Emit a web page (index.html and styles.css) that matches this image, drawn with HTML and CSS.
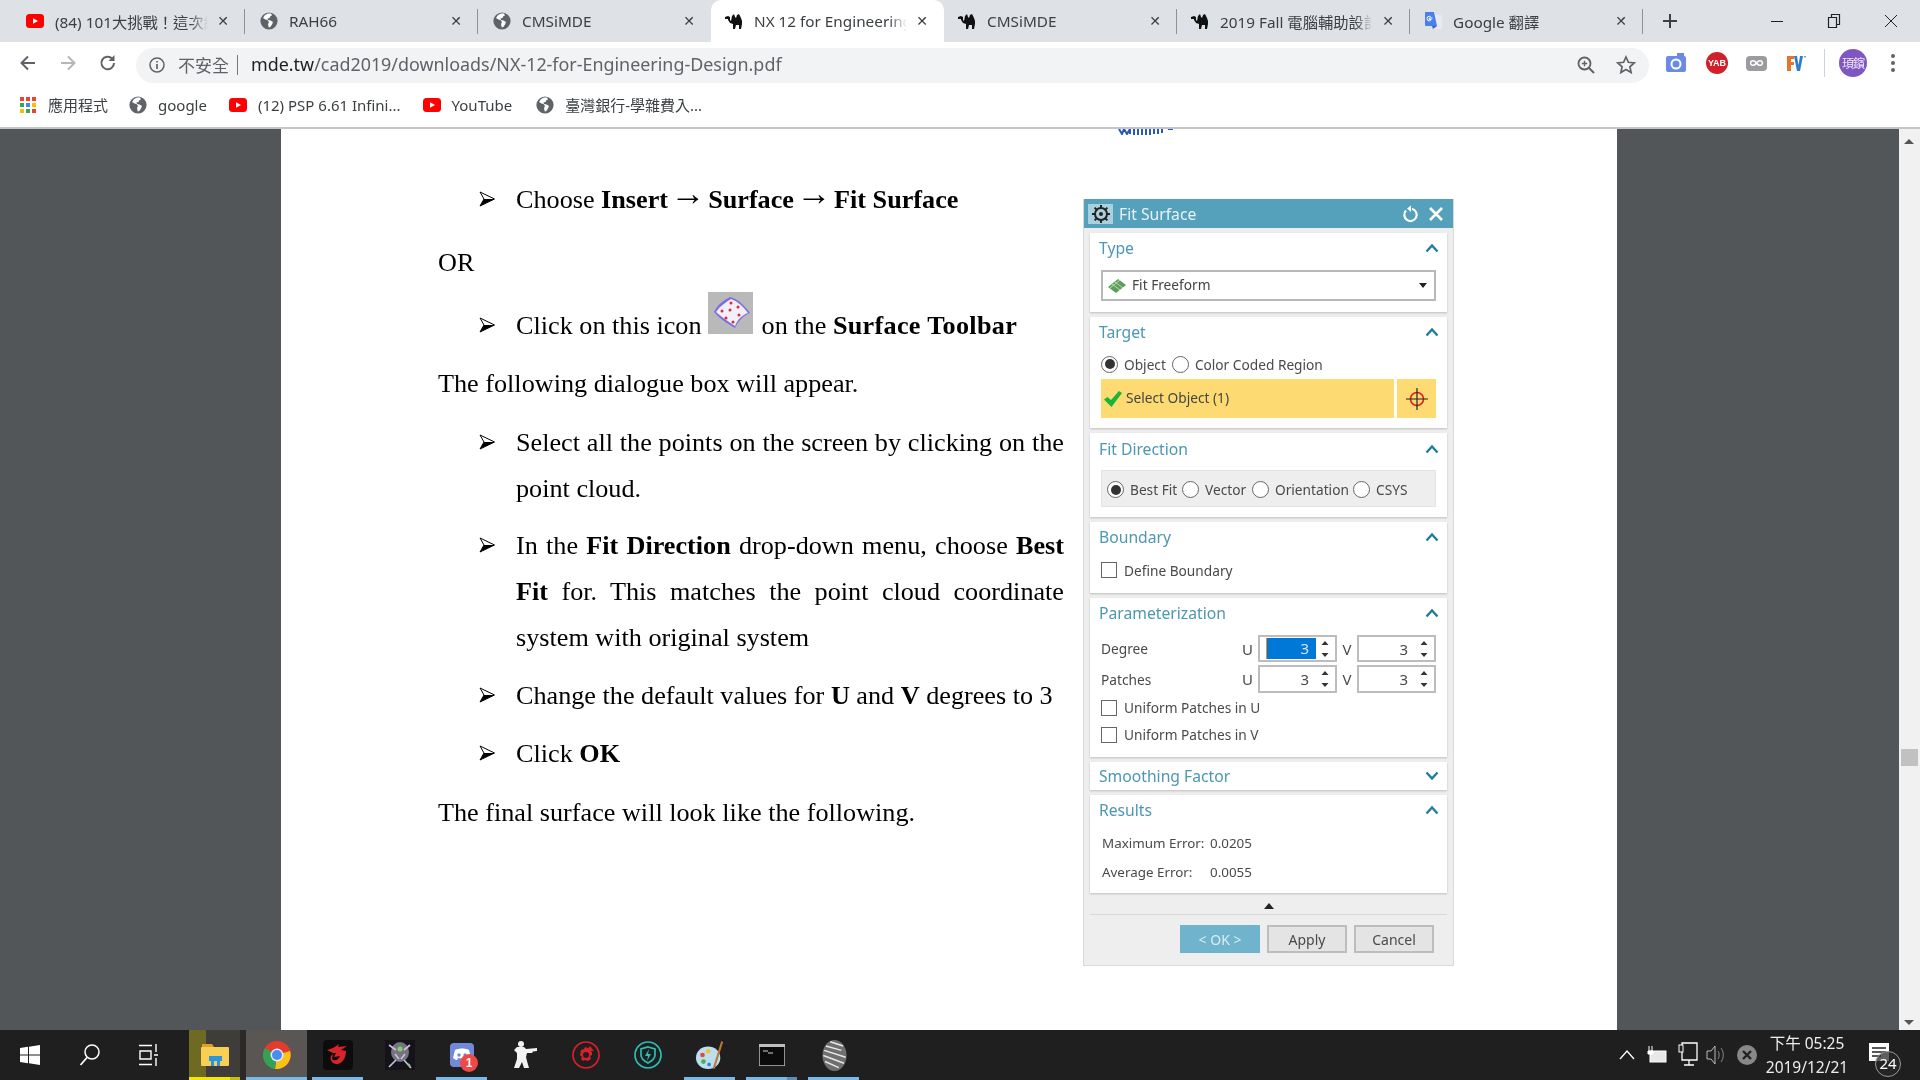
FILE: index.html
```html
<!DOCTYPE html>
<html lang="zh-Hant">
<head>
<meta charset="utf-8">
<title>NX 12 for Engineering Design</title>
<link rel="stylesheet" href="styles.css">
</head>
<body>
<svg class="defs" width="0" height="0" aria-hidden="true">
  <symbol id="globe" viewBox="0 0 18 18">
    <circle cx="9" cy="9" r="8.600" fill="#5f6368"/>
    <path d="M8 1.500 5 3 3 6l2.500 1.500 2 .5 1.500 2-1 2 .8 3.500 1.500-.5 1.700-2.500 1-2.500-2.500-1.500-2.500-.5-.5-1.500 2-.5 1-2 1.500-.5-1-2z" fill="#fff"/>
  </symbol>
  <symbol id="yt" viewBox="0 0 18 18">
    <rect x="0" y="2" width="18" height="14" rx="3.500" fill="#f00"/>
    <path d="M7 6.200v5.600L12 9z" fill="#fff"/>
  </symbol>
  <symbol id="camel" viewBox="0 0 18 18">
    <path d="M0 5l3-1 2 1v3l1 1 1-5 2-2 1 3 1 1 1-3 2-1 2 4 1 3v3l-1 5h-2v-4h-3l-1 4H8v-5l-3-1-2-3V7H0z" fill="#111"/>
  </symbol>
  <symbol id="bullet" viewBox="0 0 16 16">
    <path d="M1 1 15.500 8 1 15 5 8z" fill="#fff" stroke="#000" stroke-width="1"/>
    <path d="M5 8h10.500L1 15z" fill="#000"/>
  </symbol>
  <symbol id="spin" viewBox="0 0 12 22">
    <path d="M6 3l3.500 4h-7zM6 19l3.500-4h-7z" fill="#333"/>
  </symbol>
  <symbol id="chev-up" viewBox="0 0 14 10"><path d="M1.500 8.500 7 2.500l5.500 6" fill="none" stroke="#1f7d9c" stroke-width="2.400"/></symbol>
  <symbol id="chev-down" viewBox="0 0 14 10"><path d="M1.500 1.500 7 7.500l5.500-6" fill="none" stroke="#1f7d9c" stroke-width="2.400"/></symbol>
</svg>

<div class="app">
  <header class="chrome">
    <div class="tabstrip">
      <div class="tab sep"><svg class="fav"><use href="#yt"/></svg><span class="tt">(84) 101大挑戰！這次終於成功</span><span class="tx">✕</span></div>
      <div class="tab sep"><svg class="fav"><use href="#globe"/></svg><span class="tt">RAH66</span><span class="tx">✕</span></div>
      <div class="tab"><svg class="fav"><use href="#globe"/></svg><span class="tt">CMSiMDE</span><span class="tx">✕</span></div>
      <div class="tab active"><svg class="fav"><use href="#camel"/></svg><span class="tt">NX 12 for Engineering Design</span><span class="tx">✕</span></div>
      <div class="tab sep"><svg class="fav"><use href="#camel"/></svg><span class="tt">CMSiMDE</span><span class="tx">✕</span></div>
      <div class="tab sep"><svg class="fav"><use href="#camel"/></svg><span class="tt">2019 Fall 電腦輔助設計與實習</span><span class="tx">✕</span></div>
      <div class="tab sep">
        <svg class="fav" viewBox="0 0 18 18"><path d="M1 0h9l2 3h5a1 1 0 0 1 1 1v12a1 1 0 0 1-1 1H9z" fill="#e8eaed"/><path d="M1 0h9l3 14H2a1 1 0 0 1-1-1z" fill="#4a80ec"/><path d="M8 14h5l-4 3z" fill="#3a62c0"/><path d="M8.500 6H5.200v1.500h2c-.3 1-1 1.400-1.900 1.400A2.300 2.300 0 0 1 5.300 4.300c.6 0 1.100.2 1.500.6" fill="none" stroke="#fff" stroke-width="1"/></svg>
        <span class="tt">Google 翻譯</span><span class="tx">✕</span></div>
      <svg class="newtab" width="16" height="16" viewBox="0 0 16 16"><path d="M8 1v14M1 8h14" stroke="#3c4043" stroke-width="2"/></svg>
      <div class="winctl">
        <svg width="14" height="14" viewBox="0 0 14 14"><path d="M1 7.500h12" stroke="#222" stroke-width="1"/></svg>
        <svg width="14" height="16" viewBox="0 0 14 16"><path d="M1.500 4.500h8v10h-8zM4.500 4.500v-3h8v10h-3" fill="none" stroke="#222" stroke-width="1.200"/></svg>
        <svg width="14" height="14" viewBox="0 0 14 14"><path d="M1 1l12 12M13 1 1 13" stroke="#222" stroke-width="1"/></svg>
      </div>
    </div>

    <div class="toolbar">
      <svg class="navi" width="20" height="20" viewBox="0 0 20 20"><path d="M17 10H4M10 3.500 3.500 10l6.500 6.500" fill="none" stroke="#5f6368" stroke-width="2"/></svg>
      <svg class="navi" width="20" height="20" viewBox="0 0 20 20"><path d="M3 10h13M10 3.500l6.500 6.500-6.500 6.500" fill="none" stroke="#b4b6b9" stroke-width="2"/></svg>
      <svg class="navi" width="20" height="20" viewBox="0 0 20 20"><path d="M16 10a6.300 6.300 0 1 1-1.800-4.400" fill="none" stroke="#5f6368" stroke-width="2"/><path d="M16.500 2v6h-6z" fill="#5f6368"/></svg>
      <div class="omni">
        <svg width="16" height="16" viewBox="0 0 16 16"><circle cx="8" cy="8" r="7" fill="none" stroke="#5f6368" stroke-width="1.500"/><path d="M8 7v5M8 4v1.500" stroke="#5f6368" stroke-width="1.700"/></svg>
        <span class="insecure">不安全</span><span class="bar"></span>
        <span class="url"><b>mde.tw</b>/cad2019/downloads/NX-12-for-Engineering-Design.pdf</span>
        <span class="grow"></span>
        <svg width="20" height="20" viewBox="0 0 20 20"><circle cx="8.500" cy="8.500" r="6" fill="none" stroke="#5f6368" stroke-width="1.800"/><path d="M13 13l5 5" stroke="#5f6368" stroke-width="2"/><path d="M8.500 5.800v5.400M5.800 8.500h5.400" stroke="#5f6368" stroke-width="1.400"/></svg>
        <svg class="star" width="20" height="20" viewBox="0 0 20 20"><path d="M10 2l2.400 5.300 5.800.6-4.300 3.900 1.200 5.700L10 14.600l-5.100 2.900 1.200-5.700L1.800 7.900l5.800-.6z" fill="none" stroke="#5f6368" stroke-width="1.700"/></svg>
      </div>
      <div class="exts">
        <svg class="e-cam" width="22" height="20" viewBox="0 0 22 20"><rect x="1" y="3" width="20" height="16" rx="2" fill="#6b8ae6"/><rect x="12" y="0" width="7" height="4" fill="#6b8ae6"/><circle cx="11" cy="11" r="4.500" fill="none" stroke="#fff" stroke-width="2"/></svg>
        <span class="yab">YAB</span>
        <span class="inf">∞</span>
        <svg class="e-fv" width="20" height="16" viewBox="0 0 20 16"><path d="M1 1h7v3H5v3h3v3H5v6H1z" fill="#e8742a"/><path d="M8 1h3l1.500 9L14 1h3l-3 15h-3z" fill="#2f7fc8"/><rect x="18" y="1" width="2" height="1.500" fill="#8aa0b8"/></svg>
        <span class="extsep"></span>
        <span class="avatar">頊鑌</span>
        <svg class="e-dots" width="6" height="20" viewBox="0 0 6 20"><circle cx="3" cy="3" r="2" fill="#5f6368"/><circle cx="3" cy="10" r="2" fill="#5f6368"/><circle cx="3" cy="17" r="2" fill="#5f6368"/></svg>
      </div>
    </div>

    <nav class="bookmarks">
      <span class="bm">
        <svg width="16" height="16" viewBox="0 0 16 16"><g><rect width="4" height="4" fill="#ea4335"/><rect x="6" width="4" height="4" fill="#ea4335"/><rect x="12" width="4" height="4" fill="#ea4335"/><rect y="6" width="4" height="4" fill="#34a853"/><rect x="6" y="6" width="4" height="4" fill="#4285f4"/><rect x="12" y="6" width="4" height="4" fill="#fbbc05"/><rect y="12" width="4" height="4" fill="#fbbc05"/><rect x="6" y="12" width="4" height="4" fill="#34a853"/><rect x="12" y="12" width="4" height="4" fill="#ea4335"/></g></svg>
        應用程式</span>
      <span class="bm"><svg class="fav"><use href="#globe"/></svg>google</span>
      <span class="bm"><svg class="fav"><use href="#yt"/></svg>(12) PSP 6.61 Infini...</span>
      <span class="bm"><svg class="fav"><use href="#yt"/></svg>YouTube</span>
      <span class="bm bm-last"><svg class="fav"><use href="#globe"/></svg>臺灣銀行-學雜費入...</span>
    </nav>
  </header>

  <main class="viewer">
    <article class="page">
      <svg class="stamp" width="56" height="6" viewBox="0 0 56 6"><path d="M1 0l3 5 2-5 3 5 3-5v5M16 0v6M20 0v6M24 0v6M28 0v6M32 0v6M36 0v5M40 0v5M44 0v4M50 0h5" fill="none" stroke="#2a56c0" stroke-width="2"/></svg>
      <div class="doc">
        <p class="li wide"><span class="arrow"><svg class="bullet"><use href="#bullet"/></svg></span><span>Choose <b>Insert <span class="to">→</span> Surface <span class="to">→</span> Fit Surface</b></span></p>
        <p class="plain wide">OR</p>
        <p class="li"><span class="arrow"><svg class="bullet"><use href="#bullet"/></svg></span><span>Click on this icon
          <svg class="inline-icon" width="45" height="42" viewBox="0 0 45 42"><rect width="45" height="42" fill="#b9b9b9"/><path d="M6 20C10 12 16 8 22 5c8 2 14 8 20 16-6 2-12 8-15 15C20 32 12 27 6 20z" fill="#7b6fe0"/><path d="M8 20C12 14 18 10 23 7c6 2 12 7 17 14-6 2-10 6-13 13C20 29 13 25 8 20z" fill="#f3eefc"/><g fill="#d8302e"><circle cx="23" cy="11" r="1.500"/><circle cx="30" cy="15" r="1.500"/><circle cx="14" cy="19" r="1.500"/><circle cx="22" cy="18" r="1.500"/><circle cx="31" cy="23" r="1.500"/><circle cx="18" cy="26" r="1.500"/><circle cx="25" cy="30" r="1.500"/></g></svg>
          on the <b class="wider">Surface Toolbar</b></span></p>
        <p class="plain gap-lg">The following dialogue box will appear.</p>
        <p class="li gap-sm"><span class="arrow"><svg class="bullet"><use href="#bullet"/></svg></span><span>Select all the points on the screen by clicking on the point cloud.</span></p>
        <p class="li"><span class="arrow"><svg class="bullet"><use href="#bullet"/></svg></span><span>In the <b>Fit Direction</b> drop-down menu, choose <b>Best Fit</b> for. This matches the point cloud coordinate system with original system</span></p>
        <p class="li"><span class="arrow"><svg class="bullet"><use href="#bullet"/></svg></span><span>Change the default values for <b>U</b> and <b>V</b> degrees to 3</span></p>
        <p class="li gap-md"><span class="arrow"><svg class="bullet"><use href="#bullet"/></svg></span><span>Click <b>OK</b></span></p>
        <p class="plain">The final surface will look like the following.</p>
      </div>

      <section class="dialog">
        <div class="dlg-title">
          <span class="gear"><svg width="20" height="20" viewBox="0 0 20 20"><circle cx="10" cy="10" r="6" fill="none" stroke="#222" stroke-width="2"/><circle cx="10" cy="10" r="2" fill="#222"/><path d="M10 1v3M10 16v3M1 10h3M16 10h3M3.600 3.600l2 2M14.400 14.400l2 2M16.400 3.600l-2 2M5.600 14.400l-2 2" stroke="#222" stroke-width="2"/></svg></span>
          <span class="dlg-name">Fit Surface</span>
          <svg width="18" height="18" viewBox="0 0 18 18"><path d="M4 5.500a6.200 6.200 0 1 0 6-1.700" fill="none" stroke="#fff" stroke-width="2.200"/><path d="M9 .5v6.500L5 3.500z" fill="#fff"/></svg>
          <svg class="dlg-x" width="16" height="16" viewBox="0 0 16 16"><path d="M2 2l12 12M14 2 2 14" stroke="#fff" stroke-width="2.600"/></svg>
        </div>

        <div class="panel p-type">
          <div class="ph"><span>Type</span><svg class="chev"><use href="#chev-up"/></svg></div>
          <div class="select">
            <svg width="20" height="16" viewBox="0 0 20 16"><path d="M1 9l10-8 8 6-10 8z" fill="#5c9e5a"/><path d="M5 6l8 6M8 4l8 6M3 10l10-8" stroke="#cfe4c8" stroke-width=".8"/></svg>
            <span class="grow lift">Fit Freeform</span>
            <span class="caret"></span>
          </div>
        </div>

        <div class="panel p-target">
          <div class="ph"><span>Target</span><svg class="chev"><use href="#chev-up"/></svg></div>
          <div class="row target-radios">
            <span class="radio on"></span><span>Object</span>
            <span class="radio"></span><span>Color Coded Region</span>
          </div>
          <div class="selrow">
            <div class="selmain">
              <svg width="18" height="16" viewBox="0 0 18 16"><path d="M0 8.500 3.500 6 7 9l8-9 3 2L7.500 16z" fill="#17b53a"/></svg>
              <span class="lift">Select Object (1)</span>
            </div>
            <div class="selbtn"><svg width="24" height="24" viewBox="0 0 24 24"><circle cx="12" cy="12" r="6.500" fill="none" stroke="#e02020" stroke-width="1.600"/><path d="M12 1v22M1 12h22" stroke="#222" stroke-width="1.200"/></svg></div>
          </div>
        </div>

        <div class="panel p-fit">
          <div class="ph"><span>Fit Direction</span><svg class="chev"><use href="#chev-up"/></svg></div>
          <div class="fitbox">
            <span class="radio on"></span><span class="fit-a">Best Fit</span>
            <span class="radio"></span><span class="fit-b">Vector</span>
            <span class="radio"></span><span class="fit-c">Orientation</span>
            <span class="radio"></span><span>CSYS</span>
          </div>
        </div>

        <div class="panel p-bound">
          <div class="ph"><span>Boundary</span><svg class="chev"><use href="#chev-up"/></svg></div>
          <label class="row check-row tall"><span class="check"></span><span>Define Boundary</span></label>
        </div>

        <div class="panel p-param">
          <div class="ph"><span>Parameterization</span><svg class="chev"><use href="#chev-up"/></svg></div>
          <div class="numrow first">
            <span class="grow">Degree</span><span class="axis">U</span>
            <span class="num"><span class="val sel">3</span><svg class="spin"><use href="#spin"/></svg></span>
            <span class="axis v">V</span>
            <span class="num"><span class="val">3</span><svg class="spin"><use href="#spin"/></svg></span>
          </div>
          <div class="numrow">
            <span class="grow">Patches</span><span class="axis">U</span>
            <span class="num"><span class="val">3</span><svg class="spin"><use href="#spin"/></svg></span>
            <span class="axis v">V</span>
            <span class="num"><span class="val">3</span><svg class="spin"><use href="#spin"/></svg></span>
          </div>
          <label class="row check-row"><span class="check"></span><span>Uniform Patches in U</span></label>
          <label class="row check-row"><span class="check"></span><span>Uniform Patches in V</span></label>
        </div>

        <div class="panel p-smooth">
          <div class="ph"><span>Smoothing Factor</span><svg class="chev"><use href="#chev-down"/></svg></div>
        </div>

        <div class="panel p-results">
          <div class="ph"><span>Results</span><svg class="chev"><use href="#chev-up"/></svg></div>
          <div class="resrow"><span class="reslabel">Maximum Error:</span><span>0.0205</span></div>
          <div class="resrow"><span class="reslabel">Average Error:</span><span>0.0055</span></div>
        </div>

        <div class="scrollcue"><span class="tri"></span></div>
        <div class="buttons">
          <button class="btn ok" type="button">&lt; OK &gt;</button>
          <button class="btn" type="button">Apply</button>
          <button class="btn" type="button">Cancel</button>
        </div>
      </section>
    </article>
    <aside class="scrollbar">
      <span class="sb-up"></span>
      <span class="sb-thumb"></span>
      <span class="sb-down"></span>
    </aside>
  </main>

  <footer class="taskbar">
    <svg class="tb-start" width="20" height="20" viewBox="0 0 20 20"><path d="M0 3l8-1.200V9.500H0zM9 1.700 20 0v9.500H9zM0 10.500h8v7.700L0 17zM9 10.500h11V20L9 18.300z" fill="#fff"/></svg>
    <svg class="tb-search" width="22" height="24" viewBox="0 0 22 24"><circle cx="13" cy="9" r="7" fill="none" stroke="#fff" stroke-width="1.500"/><path d="M8 14.500 1.500 22" stroke="#fff" stroke-width="1.700"/></svg>
    <svg class="tb-view" width="20" height="22" viewBox="0 0 20 22"><path d="M0 1.500h13M0 20.500h13M1 7h11v8H1zM17 0v8M17 14v8M15 11h4" fill="none" stroke="#fff" stroke-width="1.400"/></svg>
    <span class="tb-app explorer"><svg width="28" height="22" viewBox="0 0 28 22"><path d="M1 0h10l2 3H1z" fill="#e0a030"/><rect x="0" y="3" width="28" height="19" rx="1" fill="#f7cf55"/><rect x="8" y="12" width="13" height="5" fill="#2a96df"/><path d="M10 17h3v5h-3zM16 17h3v5h-3z" fill="#2a96df"/></svg></span>
    <span class="tb-app on chromeapp"><svg width="28" height="28" viewBox="0 0 28 28"><circle cx="14" cy="14" r="14" fill="#e33b2e"/><path d="M14 14 27 10A14 14 0 0 1 12 28z" fill="#f9c21b"/><path d="M14 14 12 28A14 14 0 0 1 2 7z" fill="#31a354"/><circle cx="14" cy="14" r="6.500" fill="#e8eaed"/><circle cx="14" cy="14" r="5" fill="#4b8bf5"/></svg></span>
    <span class="tb-app on"><svg width="30" height="30" viewBox="0 0 30 30"><rect width="30" height="30" rx="4" fill="#0c0c0c"/><path d="M4 10c5-1 8-3 12-6l-1 3 9-1-6 4 5 1c0 8-5 14-10 13-5-1-6-5-5-8l2-2-1 5c3 3 7 0 8-3l-6 1 2-4-3 0z" fill="#d9232a"/></svg></span>
    <span class="tb-app"><svg width="30" height="30" viewBox="0 0 30 30"><rect width="30" height="30" fill="#14131a"/><ellipse cx="15" cy="12" rx="9" ry="10" fill="#77747f"/><circle cx="15" cy="9" r="2.500" fill="#7fd06a"/><path d="M4 27l7-7M26 28l-7-8M4 5l7 5M25 5l-6 5M10 14l4 5M20 14l-4 5" stroke="#c9bedc" stroke-width="1.700"/><path d="M23 24l2 2" stroke="#7fd06a" stroke-width="2"/></svg></span>
    <span class="tb-app on discord"><svg width="24" height="24" viewBox="0 0 24 24"><rect width="24" height="24" rx="4" fill="#7289da"/><path d="M5 7c4-2 10-2 14 0l2 8c-2 1.500-3 2-4 2l-1-2c-2 .5-6 .5-8 0l-1 2c-1 0-2-.5-4-2z" fill="#fff"/><circle cx="9" cy="12" r="1.700" fill="#7289da"/><circle cx="15" cy="12" r="1.700" fill="#7289da"/></svg><span class="badge">1</span></span>
    <span class="tb-app"><svg width="26" height="28" viewBox="0 0 26 28"><circle cx="10" cy="3" r="3" fill="#f2f2f2"/><path d="M6 6h7l2 2 11-1v3l-4 .5-1 1.500h-5l-1 4 1 4 2 7h-5l-2-6-3 6H3l3-9 0-6-3-3z" fill="#f2f2f2"/></svg></span>
    <span class="tb-app"><svg width="28" height="28" viewBox="0 0 28 28"><circle cx="14" cy="14" r="13" fill="none" stroke="#d8202a" stroke-width="1.700"/><path d="M9 9l3-1 1-2 3 1 1 3 3 1 0 3-2 1 1 3-3 2-3-1-2 1-2-2 1-2-2-2z" fill="#d8202a"/><circle cx="14" cy="14" r="3" fill="#201f1f"/><path d="M18 5l4 5-3 0-1 3-3-4z" fill="#d8202a"/></svg></span>
    <span class="tb-app"><svg width="28" height="28" viewBox="0 0 28 28"><circle cx="14" cy="14" r="13" fill="none" stroke="#2bbfb3" stroke-width="1.700"/><path d="M14 6l7 2v6c0 4-3 6-7 8-4-2-7-4-7-8V8z" fill="none" stroke="#2bbfb3" stroke-width="1.700"/><path d="M15 8l-4 7h3l-1 5 4-7h-3z" fill="#2bbfb3"/></svg></span>
    <span class="tb-app on"><svg width="30" height="30" viewBox="0 0 30 32"><ellipse cx="13" cy="19" rx="13" ry="12" fill="#bcdff0"/><circle cx="7" cy="16" r="2.500" fill="#e5483b"/><circle cx="13" cy="12" r="2.500" fill="#f2c230"/><circle cx="8" cy="23" r="2.500" fill="#4caf50"/><circle cx="14" cy="26" r="2" fill="#3f7fd6"/><path d="M27 1l2 1-9 29-2-1z" fill="#b8792f"/></svg></span>
    <span class="tb-app on cmd"><svg width="26" height="22" viewBox="0 0 26 22"><rect width="26" height="22" fill="#0b0b0b" stroke="#bfbfbf" stroke-width="1.500"/><rect width="26" height="3" fill="#bfbfbf"/><path d="M4 7h5M9 9h5" stroke="#d8d8d8" stroke-width="1"/></svg></span>
    <span class="tb-app on"><svg width="27" height="31" viewBox="0 0 28 36"><ellipse cx="14" cy="18" rx="14" ry="18" fill="#6f6f6f"/><path d="M4 7l18 5M2 12l25 8M1 18l24 9M3 25l16 7M9 2l15 5" stroke="#e8e8e8" stroke-width="1.700"/></svg></span>
    <span class="grow"></span>
    <svg class="tray-a" width="16" height="10" viewBox="0 0 16 10"><path d="M1 9l7-8 7 8" fill="none" stroke="#fff" stroke-width="1.300"/></svg>
    <svg class="tray" width="20" height="18" viewBox="0 0 20 18"><rect x="3" y="5" width="16" height="11" fill="#e8e8e8" stroke="#fff"/><path d="M2 0v5M5 0v5M1 5h5v3H1z" stroke="#fff" fill="#fff"/></svg>
    <svg class="tray tray-net" width="20" height="26" viewBox="0 0 20 26"><path d="M4 1h15v17H4zM11 18v5M6 23h10" fill="none" stroke="#fff" stroke-width="1.300"/><rect x="1" y="3" width="4" height="7" fill="#222" stroke="#fff"/></svg>
    <svg class="tray" width="20" height="24" viewBox="0 0 20 24"><path d="M1 8h4l4-5v18l-4-5H1z" fill="none" stroke="#bbb"/><path d="M12 8c1.500 2 1.500 6 0 8M15 5c3 4 3 10 0 14" fill="none" stroke="#888"/></svg>
    <svg class="tray-x" width="20" height="20" viewBox="0 0 20 20"><circle cx="10" cy="10" r="10" fill="#888"/><path d="M6 6l8 8M14 6l-8 8" stroke="#222" stroke-width="2.400"/></svg>
    <div class="clock"><span>下午 05:25</span><span>2019/12/21</span></div>
    <span class="notify"><svg width="20" height="18" viewBox="0 0 20 18"><rect width="20" height="18" fill="#fff"/><path d="M3 5h14M3 9h14M3 13h9" stroke="#222" stroke-width="1.500"/></svg><span class="ncount">24</span></span>
  </footer>
</div>
</body>
</html>
```
FILE: styles.css
```css
* { box-sizing: border-box; }
html, body { margin: 0; height: 100%; overflow: hidden; }
body { font-family: "Noto Sans", "Noto Sans CJK TC", sans-serif; color: #3c4043; }
.defs { position: absolute; }
.grow { flex: 1; }
.app { width: 1920px; height: 1080px; display: flex; flex-direction: column; filter: blur(.4px); }

/* browser chrome */
.chrome { height: 129px; background: #fff; border-bottom: 2px solid #c4c5c8; flex: none; }
.tabstrip { height: 42px; background: #dee1e6; display: flex; align-items: center; padding-left: 12px; }
.tab { width: 233px; height: 42px; display: flex; align-items: center; padding: 0 16px 0 14px; font-size: 15.300px; position: relative; flex: none; }
.tab:nth-child(2), .tab:nth-child(3) { padding-left: 15px; }
.tab.sep::after { content: ""; position: absolute; right: 0; top: 9px; height: 25px; width: 1px; background: #8f9296; }
.tab.active { background: #fff; border-radius: 10px 10px 0 0; }
.fav { width: 18px; height: 18px; flex: none; }
.tt { width: 153px; margin-left: 11px; margin-bottom: 1px; white-space: nowrap; overflow: hidden; -webkit-mask-image: linear-gradient(90deg, #000 88%, transparent); mask-image: linear-gradient(90deg, #000 88%, transparent); }
.tx { margin-left: auto; font-size: 14px; color: #3c4043; font-family: "DejaVu Sans", sans-serif; font-weight: 700; }
.newtab { margin-left: 19px; }
.winctl { margin-left: auto; display: flex; align-items: center; gap: 43px; padding-right: 22px; }

.toolbar { height: 42px; display: flex; align-items: center; padding-left: 18px; }
.navi { margin-right: 20px; flex: none; }
.toolbar .navi:nth-child(3) { margin-right: 18px; }
.omni { width: 1513px; height: 35px; margin-top: 4px; background: #f1f3f4; border-radius: 18px; display: flex; align-items: center; padding: 0 13px; flex: none; }
.insecure { margin: 0 0 2px 13px; font-size: 17px; color: #5f6368; }
.bar { width: 1px; height: 20px; background: #777; margin: 0 13px 0 8px; }
.url { font-size: 17.900px; color: #5f6368; white-space: nowrap; margin-bottom: 2px; }
.url b { font-weight: 400; color: #202124; }
.star { margin-left: 20px; }
.exts { display: flex; align-items: center; margin-left: 16px; }
.e-cam { margin-right: 19px; }
.yab { width: 22px; height: 22px; border-radius: 50%; background: #d0202a; color: #fff; font: 700 9px "Liberation Sans", sans-serif; display: flex; align-items: center; justify-content: center; margin-right: 18px; }
.inf { width: 21px; height: 15px; border-radius: 4px; background: #9a9ca0; color: #fff; font-size: 14px; line-height: 14px; text-align: center; font-weight: 700; margin-right: 19px; }
.e-fv { margin-right: 18px; }
.extsep { width: 1px; height: 28px; background: #cfd1d4; margin-right: 14px; }
.avatar { width: 28px; height: 28px; border-radius: 50%; background: #7e57c2; color: #f0e8ff; font: 12px/28px "Noto Sans CJK TC", sans-serif; text-align: center; margin-right: 23px; white-space: nowrap; letter-spacing: -1px; }

.bookmarks { height: 43px; display: flex; align-items: center; padding: 0 0 2px 20px; font-size: 15px; gap: 22px; }
.bm { display: flex; align-items: center; gap: 11px; white-space: nowrap; }
.bm:first-child { gap: 12px; margin-right: -1px; }
.bm-last { margin-left: 2px; }

/* viewer */
.viewer { flex: 1; min-height: 0; display: flex; background: #525659; padding-left: 281px; justify-content: space-between; }
.page { width: 1336px; background: #fff; display: flex; gap: 19px; padding-left: 157px; position: relative; color: #000; }
.stamp { position: absolute; left: 837px; top: 0; }
.doc { width: 626px; padding-top: 48px; font: 26.200px/46px "Liberation Serif", "Times New Roman", serif; flex: none; }
.doc p { margin: 0 0 12px; }
.doc p.wide { margin-bottom: 17px; }
.doc p.gap-lg { margin-bottom: 13px; }
.doc p.gap-sm { margin-bottom: 11px; }
.doc p.gap-md { margin-bottom: 13px; }
.li { display: flex; text-align: justify; }
.arrow { width: 78px; height: 46px; padding-left: 41px; flex: none; display: flex; align-items: center; }
.bullet { width: 16px; height: 16px; margin-top: -2px; }
.to { font: 400 35px/0 "Liberation Sans", sans-serif; margin: 0 -4px; vertical-align: 3px; }
.inline-icon { vertical-align: 0; margin: -20px 2px 0 0; }
.wider { letter-spacing: .3px; }

/* dialog */
.dialog { width: 371px; height: 767px; margin-top: 70px; background: #eeeeee; border: 1px solid #d9d9d9; border-top: 0; padding: 0 6px; font-size: 13.700px; color: #4a4a4a; flex: none; }
.dlg-title { height: 29px; margin: 0 -6px 5px; background: #55a0ba; display: flex; align-items: center; padding: 0 9px 0 4px; color: #fff; gap: 4px; }
.gear { width: 25px; height: 20px; background: #a9d0dd; display: flex; align-items: center; justify-content: center; flex: none; }
.dlg-name { flex: 1; font-size: 15.700px; color: #e8f3f6; margin-left: 2px; }
.dlg-x { margin-left: 4px; }
.lift { margin-bottom: 2px; }
.panel { background: #fff; margin-bottom: 5px; padding: 0 11px; box-shadow: 0 1px 2px #bdbdbd; }
.ph { height: 32px; margin: 0 -1px 0 -2px; padding-bottom: 2px; display: flex; align-items: center; justify-content: space-between; font-size: 15.700px; color: #4c97b3; }
.chev { width: 14px; height: 10px; margin-right: -2px; }
.p-type { height: 79px; }
.p-target { height: 111px; }
.p-target .ph { padding-bottom: 3px; }
.p-fit { height: 84px; }
.p-fit .ph { padding-bottom: 0; }
.p-bound { height: 71px; }
.p-param { height: 159px; }
.p-smooth { height: 28px; }
.p-smooth .ph { height: 28px; padding-bottom: 0; }
.p-results { height: 98px; }
.select { height: 31px; margin-top: 5px; border: 2px solid #b8b8b8; display: flex; align-items: center; padding: 0 7px 0 4px; gap: 5px; color: #444; }
.caret { width: 0; height: 0; border: 4.500px solid transparent; border-top: 5px solid #222; border-bottom: 0; }
.row { display: flex; align-items: center; gap: 6px; }
.target-radios { height: 30px; }
.radio { width: 17px; height: 17px; border-radius: 50%; border: 1.500px solid #666; background: #fff; flex: none; position: relative; }
.radio.on::after { content: ""; position: absolute; inset: 2.500px; border-radius: 50%; background: #333; }
.selrow { display: flex; gap: 3px; height: 39px; }
.selmain { flex: 1; background: #fddb72; display: flex; align-items: center; gap: 4px; padding-left: 3px; color: #444; }
.selbtn { width: 39px; background: #fddb72; display: flex; align-items: center; justify-content: center; }
.fitbox { height: 37px; margin-top: 5px; padding: 2px 0 0 5px; background: #eeeeee; border: 1px solid #e3e3e3; display: flex; align-items: center; gap: 6px; white-space: nowrap; }
.fit-a { width: 46px; }
.fit-b { width: 41px; }
.fit-c { width: 72px; }
.check-row { height: 27px; gap: 7px; }
.tall { height: 32px; }
.check { width: 16px; height: 16px; border: 1.500px solid #666; background: #fff; flex: none; }
.numrow { display: flex; align-items: center; height: 28px; margin-bottom: 1px; }
.numrow.first { margin-top: 5px; height: 27px; margin-bottom: 3px; }
.axis { width: 21px; text-align: center; font-size: 15px; }
.axis.v { width: 20px; }
.num { width: 79px; height: 100%; border: 2px solid #bdbdbd; display: flex; align-items: center; justify-content: flex-end; padding: 2px 4px 2px 6px; }
.val { flex: 1; text-align: right; padding-right: 7px; font-size: 15px; }
.val.sel { background: #0078d7; color: #d5e7f5; height: 21px; line-height: 21px; border-left: 1px solid #e08a3c; }
.spin { width: 12px; height: 22px; margin-left: 3px; flex: none; }
.resrow { display: flex; height: 29px; align-items: center; margin-left: 1px; font-size: 13.400px; }
.resrow:nth-child(2) { margin-top: 2px; height: 28px; }
.reslabel { width: 108px; flex: none; }
.scrollcue { height: 21px; border-bottom: 1px solid #d8d8d8; display: flex; justify-content: center; align-items: flex-start; padding-top: 9px; margin-top: -4px; }
.tri { width: 0; height: 0; border: 5.500px solid transparent; border-bottom: 6px solid #222; border-top: 0; }
.buttons { display: flex; justify-content: flex-end; gap: 7px; margin-top: 10px; padding-right: 13px; }
.btn { width: 80px; height: 28px; padding: 0; background: #e4e4e4; border: 2px solid #bdbdbd; font: 14px "Noto Sans", sans-serif; color: #4a4a4a; }
.btn.ok { background: #6fb4cc; border-color: #6fb4cc; color: #d9ecf3; }

.scrollbar { width: 21px; background: #f1f1f1; position: relative; flex: none; }
.sb-up, .sb-down { position: absolute; left: 5px; width: 0; height: 0; border: 5px solid transparent; }
.sb-up { top: 10px; border-bottom: 5px solid #555; border-top: 0; }
.sb-down { bottom: 5px; border-top: 5px solid #555; border-bottom: 0; }
.sb-thumb { position: absolute; left: 2px; right: 2px; top: 620px; height: 17px; background: #c1c1c1; }

/* taskbar */
.taskbar { height: 50px; background: #201f1f; display: flex; align-items: center; flex: none; color: #fff; }
.tb-start { margin-left: 20px; }
.tb-search { margin-left: 39px; }
.tb-view { margin-left: 38px; margin-right: 30px; }
.tb-app { width: 62px; height: 50px; display: flex; align-items: center; justify-content: center; position: relative; flex: none; }
.tb-app.on::after { content: ""; position: absolute; left: 5px; right: 6px; bottom: 0; height: 3px; background: #76b9ed; }
.explorer { width: 57px; padding-right: 6px; background: linear-gradient(90deg, #6f6a22 0 17px, #3f3d3a 17px 51px, #2b2a29 51px); }
.explorer::after { content: ""; position: absolute; left: 0; right: 6px; bottom: 0; height: 3px; background: linear-gradient(90deg, #f6e600 80%, #c8bb10 80%); }
.chromeapp { width: 61px; background: #5a5654; }
.chromeapp.on::after { left: 0; right: 0; }
.cmd.on::after { background: linear-gradient(90deg, #76b9ed 80%, #5c8fb8 80%); }
.badge { position: absolute; left: 29px; top: 24px; width: 18px; height: 18px; border-radius: 50%; background: #f04747; font: 700 12px/18px "Liberation Sans", sans-serif; text-align: center; color: #fff; }
.tray-a { margin-right: 12px; }
.tray { margin-right: 11px; }
.tray-net { margin-right: 8px; }
.tray-x { margin-right: 2px; }
.clock { width: 96px; display: flex; flex-direction: column; align-items: center; font-size: 15.500px; line-height: 24px; color: #eee; }
.notify { width: 65px; position: relative; height: 50px; display: flex; align-items: center; padding: 0 0 6px 14px; }
.ncount { position: absolute; left: 20px; top: 21px; width: 26px; height: 26px; border-radius: 50%; border: 1.500px solid #999; background: rgba(40,40,40,.75); font: 15px/23px "Noto Sans", sans-serif; text-align: center; }
```
